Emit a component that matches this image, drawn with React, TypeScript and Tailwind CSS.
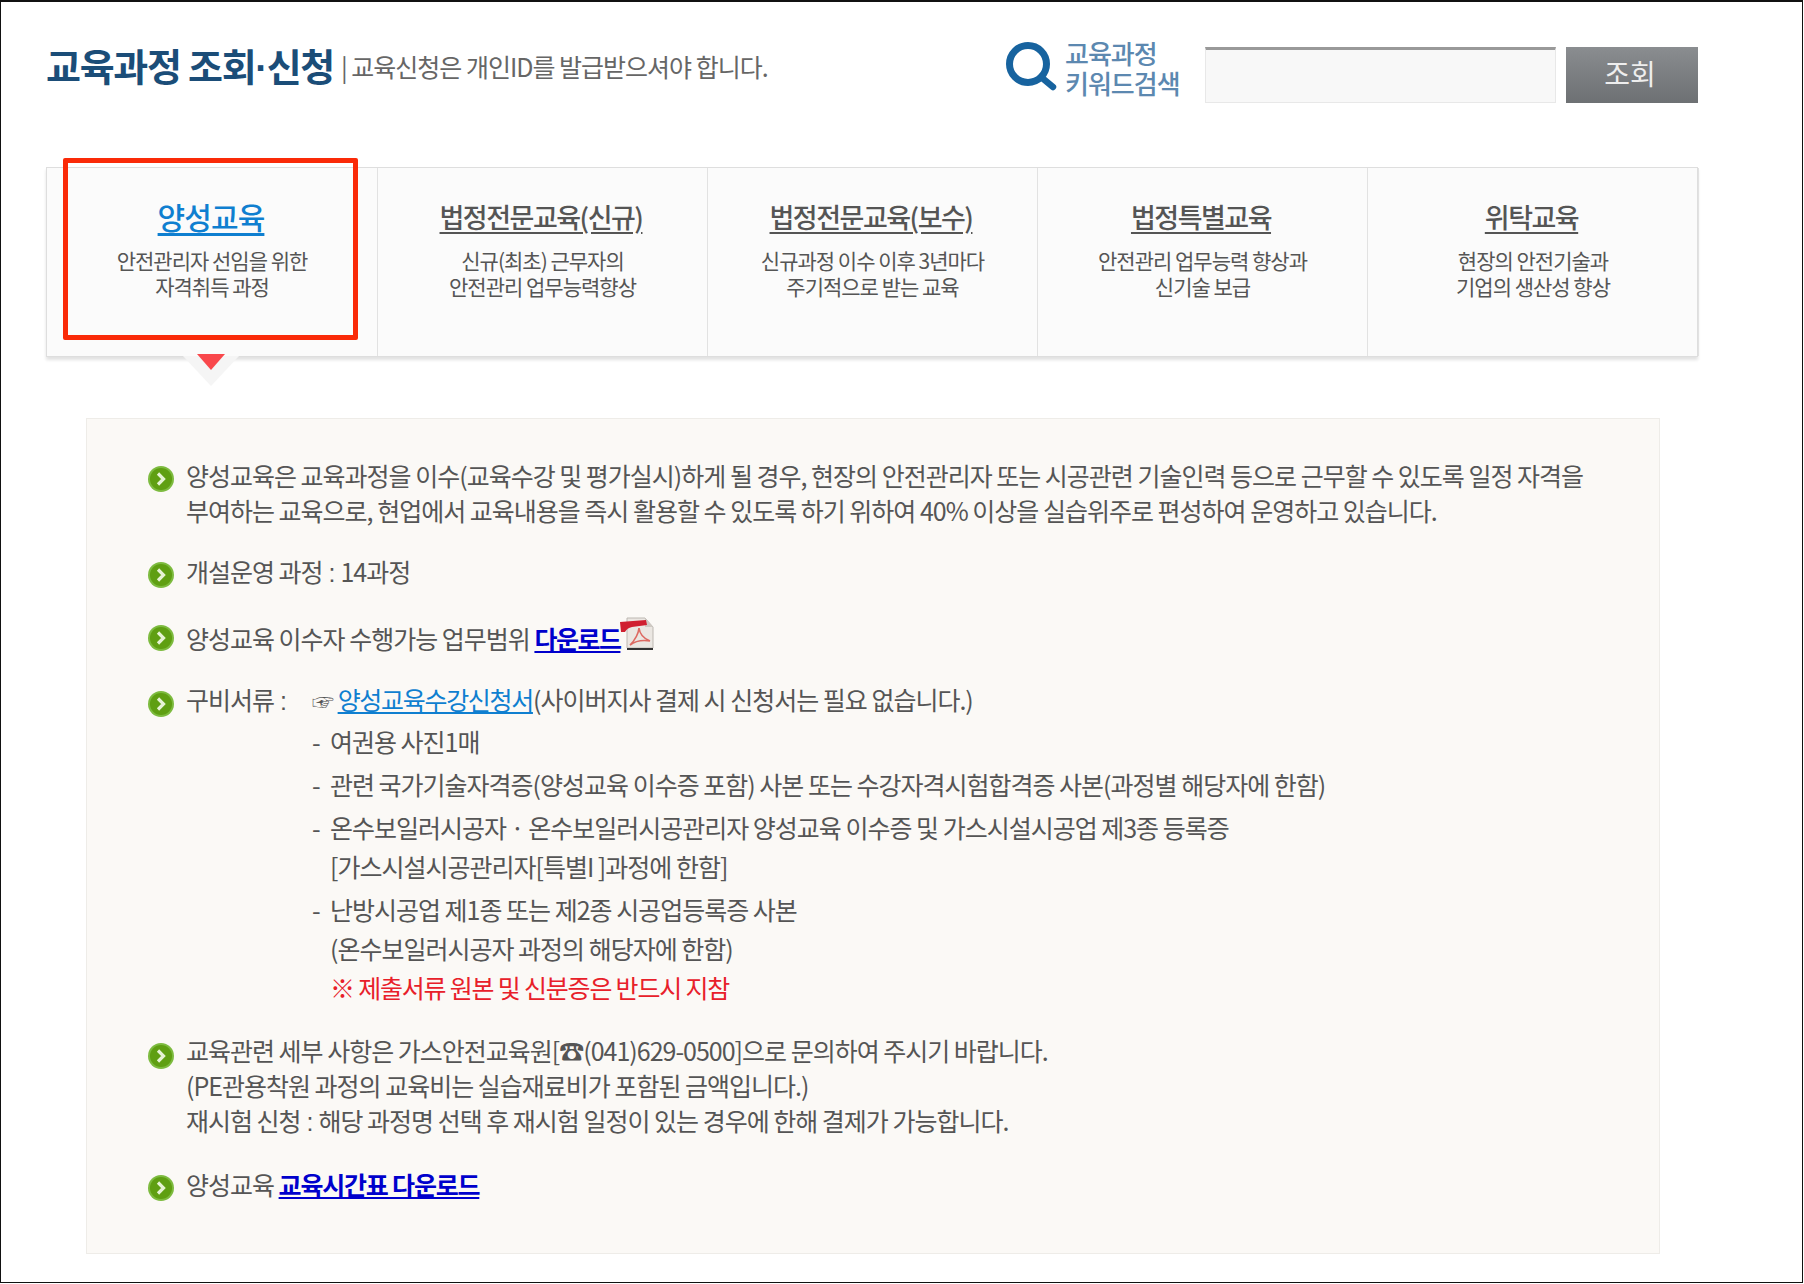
import React from "react";

const FONT = "font-['Noto_Sans_CJK_KR','Noto_Sans',sans-serif]";

const tabs = [
  { title: "양성교육", lines: ["안전관리자 선임을 위한", "자격취득 과정"], active: true },
  { title: "법정전문교육(신규)", lines: ["신규(최초) 근무자의", "안전관리 업무능력향상"] },
  { title: "법정전문교육(보수)", lines: ["신규과정 이수 이후 3년마다", "주기적으로 받는 교육"] },
  { title: "법정특별교육", lines: ["안전관리 업무능력 향상과", "신기술 보급"] },
  { title: "위탁교육", lines: ["현장의 안전기술과", "기업의 생산성 향상"] },
];

const Bullet = () => (
  <svg width="26" height="26" viewBox="0 0 26 26" className="shrink-0">
    <circle cx="13" cy="13" r="13" fill="#7dbb3f" />
    <circle cx="13" cy="13" r="11" fill="#5f9f12" />
    <path d="M10 7.5 L15.5 13 L10 18.5" fill="none" stroke="#e6f3d4" strokeWidth="3.2" />
  </svg>
);

const PdfIcon = () => (
  <svg width="34" height="34" viewBox="0 0 34 34" className="relative -top-[8px] -my-[8px] inline-block">
    <path d="M7 1 H25 L33 10 V31 H7 Z" fill="#ebe7e2" stroke="#bdb8b2" />
    <path d="M25 1 V10 H33 Z" fill="#cfcac4" />
    <path d="M7 32 H33" stroke="#333" strokeWidth="2" />
    <path d="M0 5 L26 3 L27 8 L12 10 Q7 11 5 15 L1 15 Z" fill="#d01f30" />
    <path d="M10 28 Q18 20 19 11 Q20 20 30 24 Q18 22 10 28 Z" fill="none" stroke="#dd6a62" strokeWidth="1.6" />
  </svg>
);

const SearchIcon = () => (
  <svg width="52" height="50" viewBox="0 0 52 50" className="shrink-0">
    <circle cx="22" cy="22" r="18.5" fill="none" stroke="#17639f" strokeWidth="7" />
    <path d="M35 35 L47 45" stroke="#17639f" strokeWidth="6.5" strokeLinecap="round" />
  </svg>
);

const Row = ({ children, className, bullet = "pt-[8px]" }: { children: React.ReactNode; className: string; bullet?: string }) => (
  <div className={`flex gap-[12px] ${className}`}>
    <div className={bullet}>
      <Bullet />
    </div>
    <div className="min-w-0 flex-1">{children}</div>
  </div>
);

const Doc = ({ children, first }: { children: React.ReactNode; first?: boolean }) => (
  <div className={`flex leading-[39px] ${first ? "" : "mt-[4px]"}`}>
    <span className="w-[18px] shrink-0">-</span>
    <div>{children}</div>
  </div>
);

// the colon sits in wider latin spaces than the hangul font gives
const Colon = () => <span className="font-['Liberation_Sans',sans-serif]"> : </span>;

export default function App() {
  return (
    <div className={`${FONT} relative h-[1283px] w-[1803px] border border-t-2 border-[#111] bg-white pl-[45px] tracking-[-1px] text-[#555]`}>
      <header className="flex h-[165px] items-start">
        <div className="mt-[38px] flex items-center">
          <h1 className="text-[38px] leading-[50px] font-bold tracking-[-1.3px] whitespace-nowrap text-[#1b4d78]">
            교육과정 조회<span className="font-['Liberation_Sans',sans-serif]">·</span>신청
          </h1>
          <span className="ml-[7px] text-[25px] whitespace-nowrap text-[#666]">| 교육신청은 개인ID를 발급받으셔야 합니다.</span>
        </div>
        <div className="mt-[34px] ml-auto mr-[104px] flex items-start">
          <div className="mt-[6px] ml-[1px]">
            <SearchIcon />
          </div>
          <div className="mt-[2px] ml-[7px] w-[140px] text-[26px] leading-[30px] font-medium text-[#5c88b0]">
            교육과정
            <br />
            키워드검색
          </div>
          <div className="mt-[11px] h-[56px] w-[351px] border border-t-[3px] border-[#e8e8e8] border-t-[#999] bg-[#f8f8f8]" />
          <button className="mt-[11px] ml-[10px] h-[56px] w-[132px] bg-gradient-to-b from-[#8a8d90] to-[#6d7073] pr-[4px] pb-[5px] text-[28px] tracking-normal text-[#eee]">조회</button>
        </div>
      </header>

      <nav className="relative grid h-[190px] w-[1652px] grid-cols-[331px_330px_330px_330px_331px] border border-[#dedede] bg-[#fbfbfb] shadow-[0_3px_3px_#e2e2e2]">
        {tabs.map((t) => (
          <div key={t.title} className="border-r border-[#e2e2e2] pt-[28px] text-center last:border-r-0">
            <a className={`inline-block leading-[40px] font-medium underline underline-offset-[4px] ${t.active ? "-ml-[2px] text-[30px] tracking-[-0.9px] text-[#0f7fd0]" : "relative top-[1px] -ml-[3px] text-[27px] tracking-[-1.5px] text-[#555]"}`}>{t.title}</a>
            <p className="mt-[11px] text-[21px] leading-[26px] tracking-[-1px] text-[#555]">
              {t.lines[0]}
              <br />
              {t.lines[1]}
            </p>
          </div>
        ))}
        <div className="absolute top-[-10px] left-[16px] h-[182px] w-[295px] rounded-[2px] border-[5px] border-[#fa2a08]" />
        <div className="absolute top-[188px] left-[136px] h-0 w-0 border-x-[28px] border-t-[30px] border-x-transparent border-t-[#f5f5f5]" />
        <div className="absolute top-[186px] left-[150px] h-0 w-0 border-x-[14px] border-t-[16px] border-x-transparent border-t-[#f9484c]" />
      </nav>

      <main className="mt-[61px] ml-[40px] h-[836px] w-[1574px] border border-[#eeece8] bg-[#fbf9f6] pt-[39px] pl-[61px] text-[25px] leading-[35px]">
        <Row className="">
          양성교육은 교육과정을 이수(교육수강 및 평가실시)하게 될 경우, 현장의 안전관리자 또는 시공관련 기술인력 등으로 근무할 수 있도록 일정 자격을
          <br />
          부여하는 교육으로, 현업에서 교육내용을 즉시 활용할 수 있도록 하기 위하여 40% 이상을 실습위주로 편성하여 운영하고 있습니다.
        </Row>
        <Row className="mt-[26px]">
          개설운영 과정<Colon />14과정
        </Row>
        <Row className="mt-[30px]" bullet="pt-[4px]">
          양성교육 이수자 수행가능 업무범위{" "}
          <a className="font-bold tracking-[-1.5px] text-[#0000cc] underline">다운로드</a>
          <PdfIcon />
        </Row>
        <Row className="mt-[26px]" bullet="pt-[9px]">
          <div className="flex">
            <span className="w-[126px] shrink-0">
              구비서류<Colon />
            </span>
            <div>
              <div>
                <span className="text-[22px]">☞</span>{" "}
                <a className="tracking-[-1.3px] text-[#0f7fd0] underline">양성교육수강신청서</a>(사이버지사 결제 시 신청서는 필요 없습니다.)
              </div>
              <div className="mt-[4px]">
                <Doc first>여권용 사진1매</Doc>
                <Doc>관련 국가기술자격증(양성교육 이수증 포함) 사본 또는 수강자격시험합격증 사본(과정별 해당자에 한함)</Doc>
                <Doc>
                  온수보일러시공자 · 온수보일러시공관리자 양성교육 이수증 및 가스시설시공업 제3종 등록증
                  <br />
                  [가스시설시공관리자[특별I ]과정에 한함]
                </Doc>
                <Doc>
                  난방시공업 제1종 또는 제2종 시공업등록증 사본
                  <br />
                  (온수보일러시공자 과정의 해당자에 한함)
                  <br />
                  <span className="tracking-[-1.2px] text-[#e8202a]">※ 제출서류 원본 및 신분증은 반드시 지참</span>
                </Doc>
              </div>
            </div>
          </div>
        </Row>
        <Row className="mt-[26px]" bullet="pt-[10px]">
          교육관련 세부 사항은 가스안전교육원[☎(041)629-0500]으로 문의하여 주시기 바랍니다.
          <br />
          (PE관용착원 과정의 교육비는 실습재료비가 포함된 금액입니다.)
          <br />
          재시험 신청<Colon />해당 과정명 선택 후 재시험 일정이 있는 경우에 한해 결제가 가능합니다.
        </Row>
        <Row className="mt-[27px]">
          양성교육 <a className="font-bold tracking-[-1.2px] text-[#0000cc] underline">교육시간표 다운로드</a>
        </Row>
      </main>
    </div>
  );
}
